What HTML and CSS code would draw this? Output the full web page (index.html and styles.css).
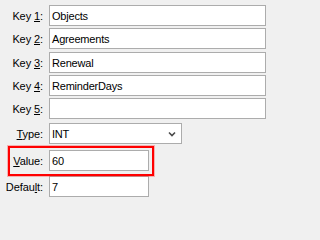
FILE: index.html
```html
<!DOCTYPE html>
<html>
<head>
<meta charset="utf-8">
<link rel="stylesheet" href="styles.css">
</head>
<body>
<div class="form">
  <div class="row r1"><label class="lbl">Key <u>1</u>:</label><div class="field wide">Objects</div></div>
  <div class="row r2"><label class="lbl">Key <u>2</u>:</label><div class="field wide">Agreements</div></div>
  <div class="row r3"><label class="lbl">Key <u>3</u>:</label><div class="field wide">Renewal</div></div>
  <div class="row r4"><label class="lbl">Key <u>4</u>:</label><div class="field wide">ReminderDays</div></div>
  <div class="row r5"><label class="lbl">Key <u>5</u>:</label><div class="field wide"></div></div>
  <div class="row r6"><label class="lbl"><u>T</u>ype:</label>
    <div class="field combo"><span>INT</span>
      <svg class="chev" width="8" height="6" viewBox="0 0 8 6"><path d="M1 1.5 L4 4.5 L7 1.5" fill="none" stroke="#4a4a4a" stroke-width="1.6"/></svg>
    </div>
  </div>
  <div class="row r7 highlight"><label class="lbl"><u>V</u>alue:</label><div class="field short">60</div></div>
  <div class="row r8"><label class="lbl">Defau<u>l</u>t:</label><div class="field short">7</div></div>
</div>
</body>
</html>
```

FILE: styles.css
```css
html, body {
  margin: 0;
  padding: 0;
  background: #f0f0f0;
}
body {
  width: 271px;
  height: 202px;
  overflow: hidden;
  font-family: "Liberation Sans", Arial, sans-serif;
  font-size: 11px;
  color: #000;
}
.form {
  display: flex;
  flex-direction: column;
  padding-top: 5px;
}
.row {
  display: flex;
  align-items: center;
  height: 21px;
}
.r2 { margin-top: 2px; }
.r3 { margin-top: 3px; }
.r4 { margin-top: 2px; }
.r5 { margin-top: 2px; }
.r6 { margin-top: 4px; }
.r7 { margin-top: 6px; }
.r8 { margin-top: 5px; }
.lbl {
  width: 43px;
  text-align: right;
  margin-right: 6px;
  white-space: nowrap;
  letter-spacing: -0.1px;
}
.lbl u {
  text-decoration-thickness: 1px;
  text-underline-offset: 1px;
}
.field {
  box-sizing: border-box;
  height: 21px;
  background: #fff;
  border: 1px solid #acacac;
  padding: 0 0 0 2px;
  display: flex;
  align-items: center;
  letter-spacing: -0.2px;
}
.wide { width: 217px; }
.combo {
  width: 133px;
  justify-content: space-between;
  padding-right: 5px;
}
.chev { display: block; margin-top: 1px; }
.short { width: 100px; }
.highlight { position: relative; }
.highlight::before {
  content: "";
  position: absolute;
  left: 8px;
  top: -4px;
  width: 146px;
  height: 30px;
  box-sizing: border-box;
  border: 2px solid #ff0000;
  box-shadow: 0 0 0 1px rgba(255, 60, 60, 0.35);
  pointer-events: none;
}
```
